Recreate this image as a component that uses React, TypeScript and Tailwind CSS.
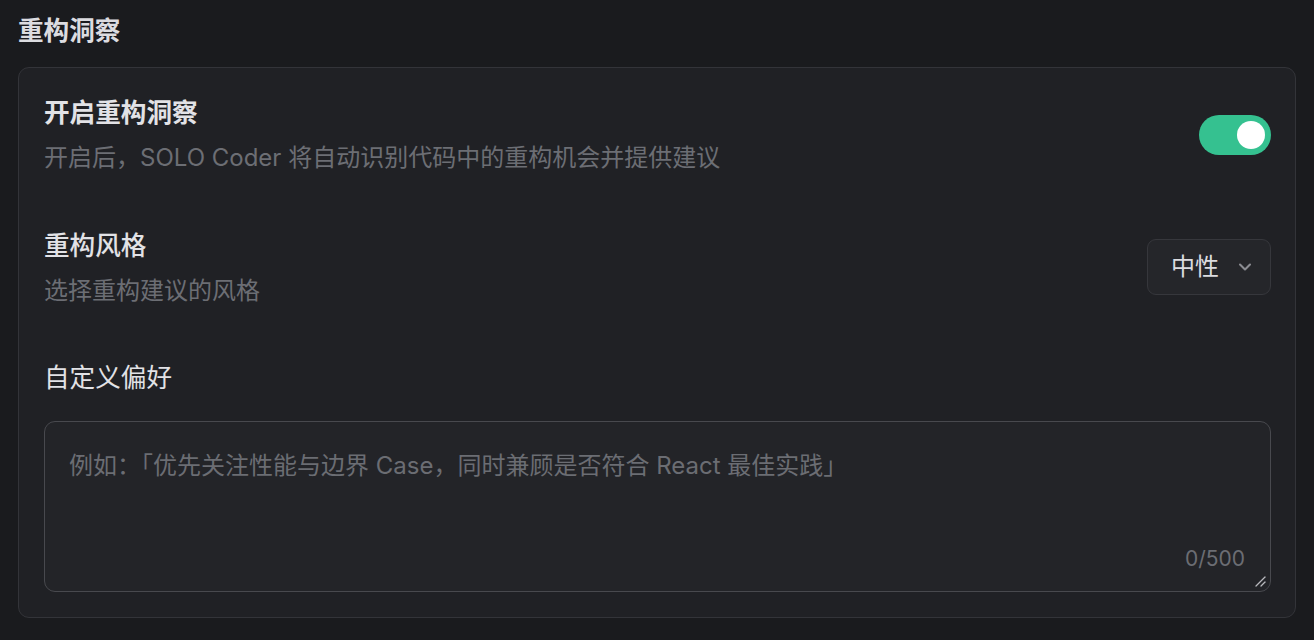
import { ChevronDown } from "lucide-react"

const font = { fontFamily: '"Inter", "Noto Sans CJK SC", sans-serif' }

function Toggle({ on }: { on: boolean }) {
  return (
    <button
      className={`flex h-[40px] w-[72px] shrink-0 items-center rounded-full px-[6px] ${on ? "justify-end bg-[#35c190]" : "justify-start bg-[#3a3b40]"}`}
    >
      <span className="h-[28px] w-[28px] rounded-full bg-white" />
    </button>
  )
}

export default function App() {
  return (
    <div style={font} className="min-h-[640px] w-full bg-[#1a1b1e] px-[18px] pt-[13px] pb-[22px]">
      <h2 className="text-[25.6px] leading-[36px] font-semibold text-[#dcdce0]">重构洞察</h2>

      <div className="mt-[18px] rounded-[11px] border border-[#333439] bg-[#202125] pl-[25px] pr-[24px] pt-[27px] pb-[25px]">
        {/* enable */}
        <div className="flex items-center justify-between">
          <div className="flex flex-col gap-[9px]">
            <div className="text-[25.6px] leading-[36px] font-semibold text-[#e2e2e6]">开启重构洞察</div>
            <div className="text-[24px] leading-[36px] text-[#6c6e74]">
              开启后，SOLO Coder 将自动识别代码中的重构机会并提供建议
            </div>
          </div>
          <div className="mb-[2px]">
            <Toggle on />
          </div>
        </div>

        {/* style */}
        <div className="mt-[52px] flex items-center justify-between">
          <div className="flex flex-col gap-[9px]">
            <div className="text-[25.6px] leading-[36px] font-medium text-[#e2e2e6]">重构风格</div>
            <div className="text-[24px] leading-[36px] text-[#6c6e74]">选择重构建议的风格</div>
          </div>
          <button className="mb-[4px] flex h-[56px] w-[124px] items-center gap-[16px] rounded-[9px] border border-[#36373c] bg-[#25262a] pl-[23px]">
            <span className="text-[24px] leading-none text-[#dcdce0]">中性</span>
            <ChevronDown className="h-[20px] w-[20px] text-[#8b8c92]" strokeWidth={2.5} />
          </button>
        </div>

        {/* custom */}
        <div className="mt-[51px] text-[25.6px] leading-[36px] text-[#e2e2e6]">自定义偏好</div>
        <div className="relative mt-[25px] h-[171px] rounded-[11px] border border-[#48494e] bg-[#232428]">
          <textarea
            style={font}
            placeholder="例如：「优先关注性能与边界 Case，同时兼顾是否符合 React 最佳实践」"
            className="h-full w-full resize-none bg-transparent px-[24px] pt-[26px] text-[24px] leading-[36px] text-[#dcdce0] outline-none placeholder:text-[#6b6d73]"
          />
          <span className="absolute right-[25px] bottom-[16px] text-[21px] leading-[32px] text-[#6b6d73]">0/500</span>
          <svg className="absolute right-[3px] bottom-[3px]" width="14" height="14" viewBox="0 0 14 14">
            <path d="M3 12 L12 3" stroke="#b8b9bd" strokeWidth="1.3" strokeLinecap="round" />
            <path d="M8 12 L12 8" stroke="#b8b9bd" strokeWidth="1.3" strokeLinecap="round" />
          </svg>
        </div>
      </div>
    </div>
  )
}
